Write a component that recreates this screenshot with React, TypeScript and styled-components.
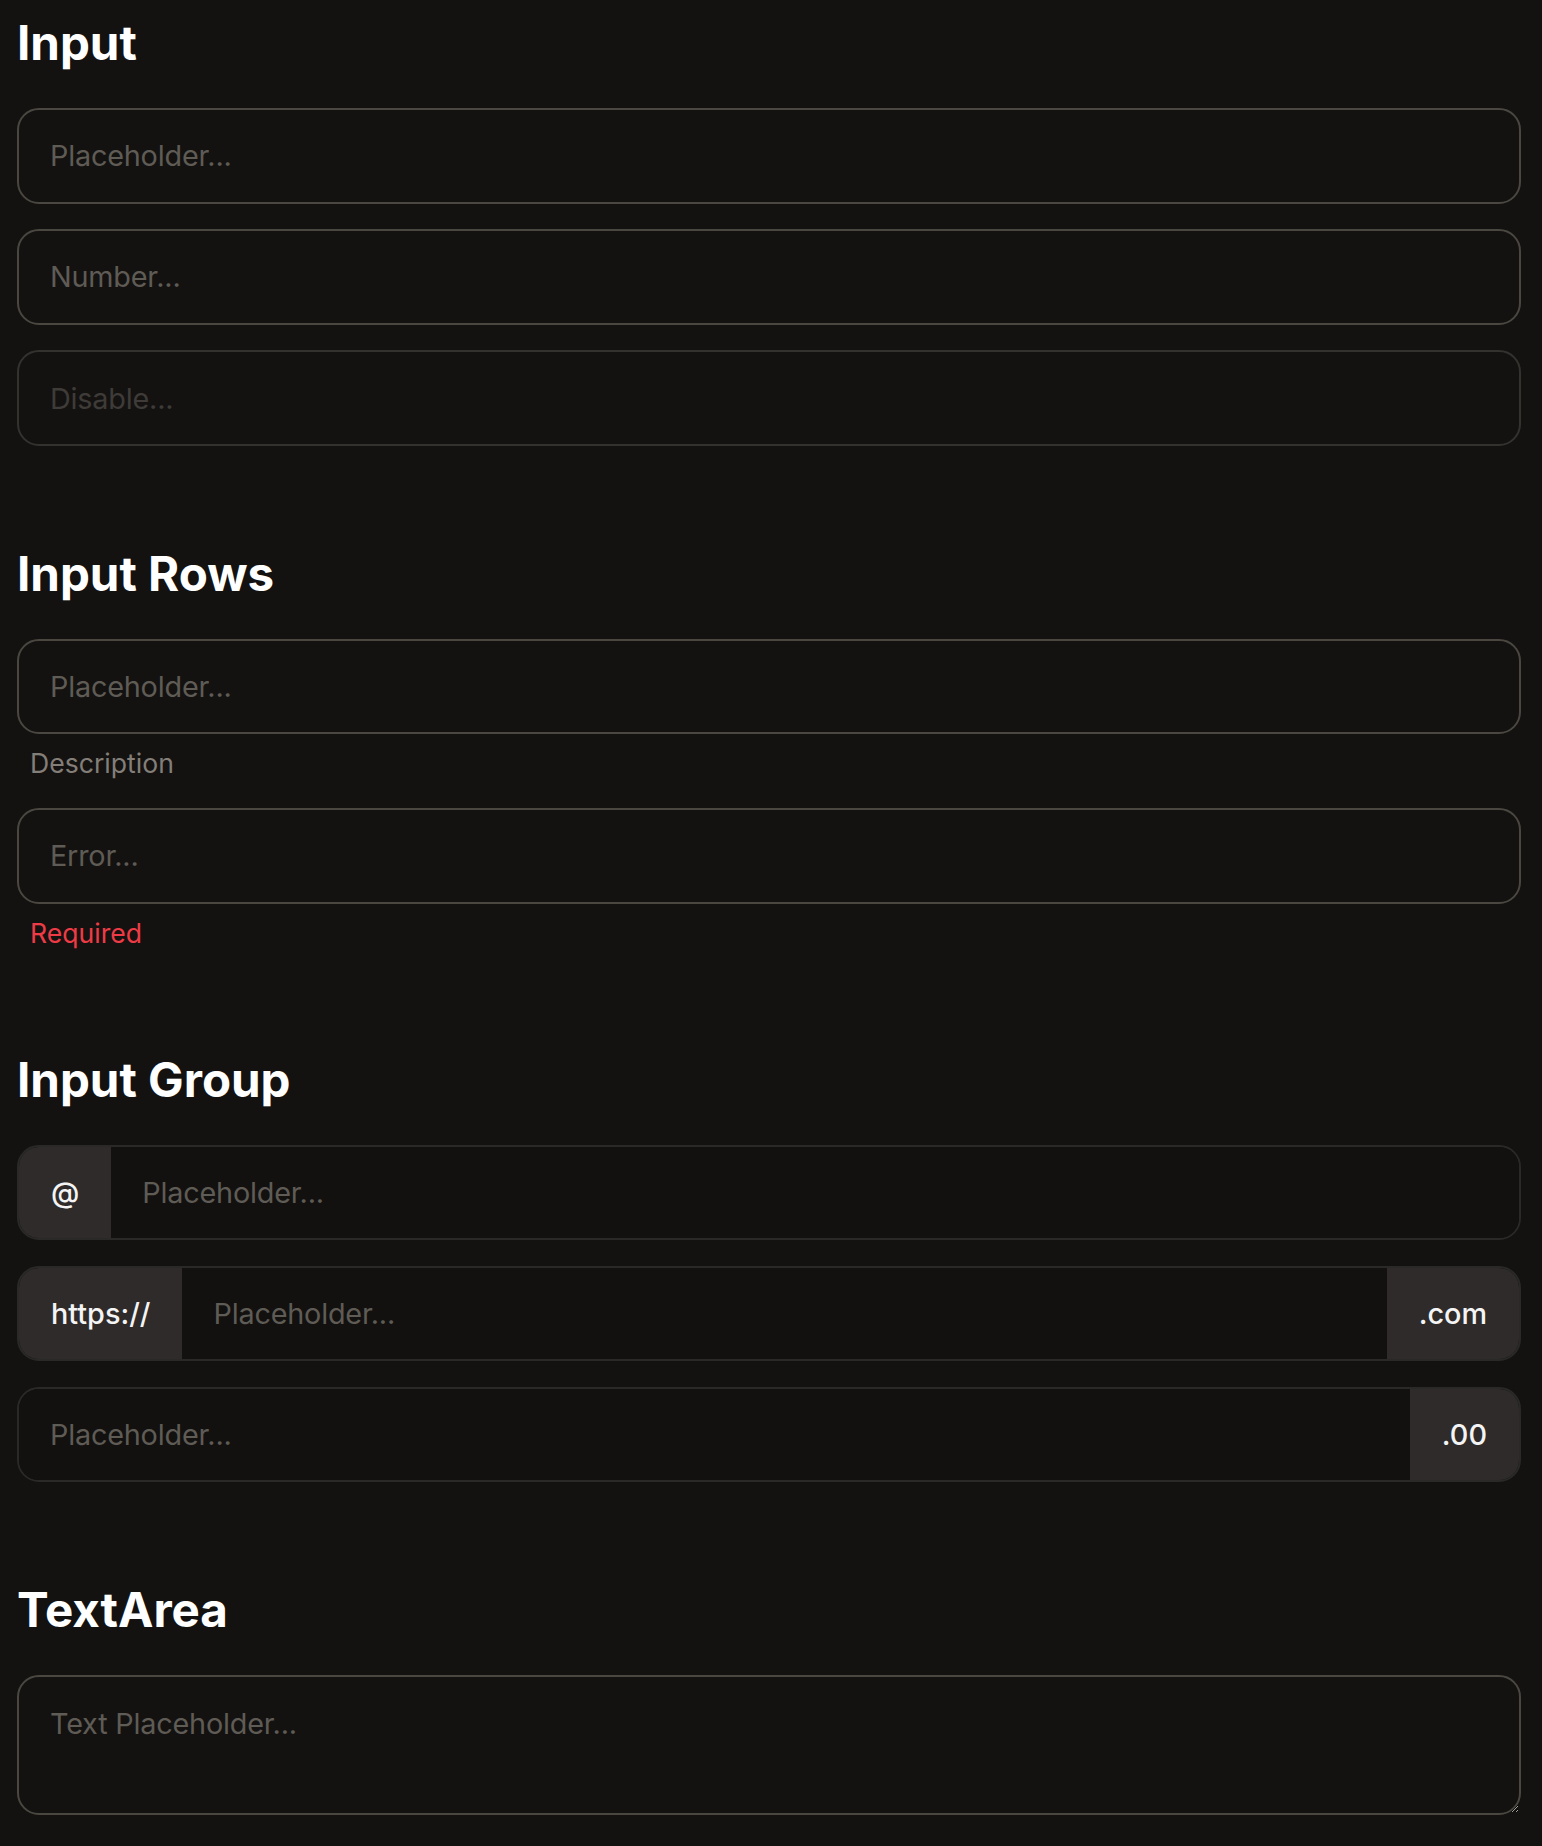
import React from "react";
import styled, { createGlobalStyle } from "styled-components";

const GlobalStyle = createGlobalStyle`
  html, body {
    margin: 0;
    padding: 0;
    background: #131211;
  }
  body {
    font-family: Inter, "Noto Sans", "Liberation Sans", sans-serif;
    color: #f4f4f4;
  }
  * { box-sizing: border-box; }
`;

const Page = styled.main`
  display: flex;
  flex-direction: column;
  gap: 100px;
  padding: 15px 21px 14px 17px;
`;

const Section = styled.section`
  display: flex;
  flex-direction: column;
  gap: 37px;
`;

const Heading = styled.h2`
  margin: 0;
  font-size: 47.5px;
  line-height: 56px;
  font-weight: 700;
  letter-spacing: 0;
  color: #ffffff;
`;

const Stack = styled.div`
  display: flex;
  flex-direction: column;
  gap: 25.7px;
`;

const Field = styled.div`
  display: flex;
  flex-direction: column;
  gap: 11px;
`;

const Hint = styled.span<{ $error?: boolean }>`
  padding-left: 13px;
  font-size: 26.6px;
  line-height: 37px;
  color: ${(p) => (p.$error ? "#ef3b45" : "#837e78")};
`;

const TextInput = styled.input`
  display: block;
  width: 100%;
  height: 95.5px;
  padding: 0 31px;
  border: 2px solid #4a4740;
  border-radius: 22px;
  background: transparent;
  color: #f0f0f0;
  font-family: inherit;
  font-size: 28.8px;
  letter-spacing: -0.2px;
  outline: none;
  color-scheme: dark;

  &::placeholder {
    color: #5f5b55;
  }

  &:disabled {
    border-color: #34322f;
    background: transparent;
  }
  &:disabled::placeholder {
    color: #3e3b38;
  }
  &::-webkit-inner-spin-button,
  &::-webkit-outer-spin-button {
    -webkit-appearance: none;
    margin: 0;
  }
`;

const Group = styled.div`
  display: flex;
  width: 100%;
  height: 95.5px;
  border: 2px solid #2b2928;
  border-radius: 22px;
  overflow: hidden;
  background: #121110;
`;

const GroupInput = styled.input`
  flex: 1;
  min-width: 0;
  height: 100%;
  padding: 0 31px;
  border: none;
  background: #121110;
  color: #f0f0f0;
  font-family: inherit;
  font-size: 28.8px;
  letter-spacing: -0.2px;
  outline: none;

  &::placeholder {
    color: #5f5b55;
  }
`;

const Addon = styled.span`
  display: flex;
  align-items: center;
  flex-shrink: 0;
  padding: 0 32px;
  background: #2e2b2a;
  color: #f4f4f4;
  font-size: 28.8px;
  font-weight: 500;
  white-space: nowrap;
`;

const TextArea = styled.textarea`
  display: block;
  width: 100%;
  height: 140px;
  padding: 27px 31px 20px;
  border: 2px solid #4a4740;
  border-radius: 22px;
  background: transparent;
  color: #f0f0f0;
  font-family: inherit;
  font-size: 28.8px;
  letter-spacing: -0.2px;
  line-height: 1.4;
  resize: vertical;
  outline: none;
  color-scheme: dark;

  &::placeholder {
    color: #5f5b55;
  }
`;

export default function App() {
  return (
    <>
      <GlobalStyle />
      <Page>
        <Section>
          <Heading>Input</Heading>
          <Stack>
            <TextInput type="text" placeholder="Placeholder..." />
            <TextInput type="number" placeholder="Number..." />
            <TextInput type="text" placeholder="Disable..." disabled />
          </Stack>
        </Section>

        <Section>
          <Heading>Input Rows</Heading>
          <Stack>
            <Field>
              <TextInput type="text" placeholder="Placeholder..." />
              <Hint>Description</Hint>
            </Field>
            <Field>
              <TextInput type="text" placeholder="Error..." />
              <Hint $error>Required</Hint>
            </Field>
          </Stack>
        </Section>

        <Section>
          <Heading>Input Group</Heading>
          <Stack>
            <Group>
              <Addon>@</Addon>
              <GroupInput type="text" placeholder="Placeholder..." />
            </Group>
            <Group>
              <Addon>https://</Addon>
              <GroupInput type="text" placeholder="Placeholder..." />
              <Addon>.com</Addon>
            </Group>
            <Group>
              <GroupInput type="text" placeholder="Placeholder..." />
              <Addon>.00</Addon>
            </Group>
          </Stack>
        </Section>

        <Section>
          <Heading>TextArea</Heading>
          <TextArea placeholder="Text Placeholder..." />
        </Section>
      </Page>
    </>
  );
}
